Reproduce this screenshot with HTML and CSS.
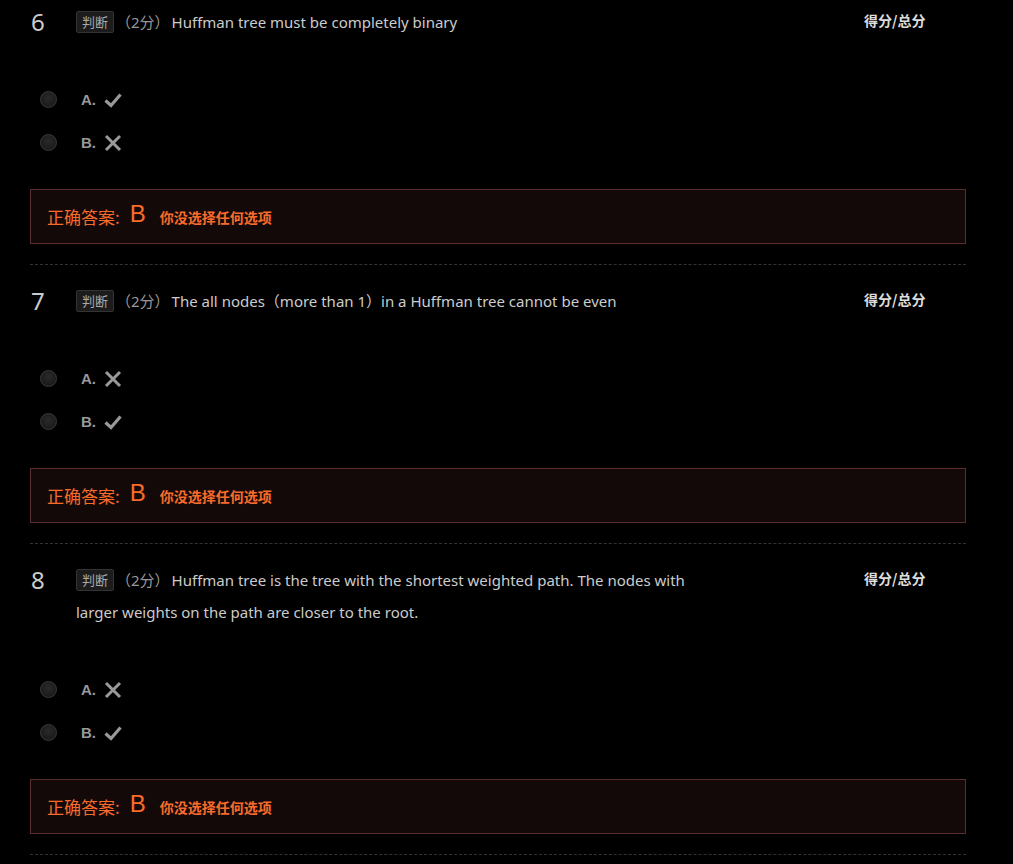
FILE: index.html
```html
<!DOCTYPE html>
<html lang="zh">
<head>
<meta charset="utf-8">
<link rel="stylesheet" href="styles.css">
</head>
<body>
<div class="list">
  <div class="question first">
    <div class="q-head">
      <div class="q-num">6</div>
      <div class="q-body"><span class="tag">判断</span><span class="score">（2分）</span>Huffman tree must be completely binary</div>
      <div class="q-points">得分/总分</div>
    </div>
    <ul class="options">
      <li class="option"><span class="radio"></span><span class="opt-label">A.</span><svg class="icon" viewBox="0 0 18 18"><path d="M1.5 9.5 L7 14.5 L16.5 3.5" fill="none" stroke="#999" stroke-width="3.2"/></svg></li>
      <li class="option"><span class="radio"></span><span class="opt-label">B.</span><svg class="icon" viewBox="0 0 18 18"><path d="M2 2 L16 16 M16 2 L2 16" fill="none" stroke="#999" stroke-width="3"/></svg></li>
    </ul>
    <div class="answer"><span class="ans-label">正确答案:</span><span class="ans-value">B</span><span class="ans-note">你没选择任何选项</span></div>
  </div>

  <div class="question">
    <div class="q-head">
      <div class="q-num">7</div>
      <div class="q-body"><span class="tag">判断</span><span class="score">（2分）</span>The all nodes（more than 1）in a Huffman tree cannot be even</div>
      <div class="q-points">得分/总分</div>
    </div>
    <ul class="options">
      <li class="option"><span class="radio"></span><span class="opt-label">A.</span><svg class="icon" viewBox="0 0 18 18"><path d="M2 2 L16 16 M16 2 L2 16" fill="none" stroke="#999" stroke-width="3"/></svg></li>
      <li class="option"><span class="radio"></span><span class="opt-label">B.</span><svg class="icon" viewBox="0 0 18 18"><path d="M1.5 9.5 L7 14.5 L16.5 3.5" fill="none" stroke="#999" stroke-width="3.2"/></svg></li>
    </ul>
    <div class="answer"><span class="ans-label">正确答案:</span><span class="ans-value">B</span><span class="ans-note">你没选择任何选项</span></div>
  </div>

  <div class="question">
    <div class="q-head">
      <div class="q-num">8</div>
      <div class="q-body"><span class="tag">判断</span><span class="score">（2分）</span>Huffman tree is the tree with the shortest weighted path. The nodes with larger weights on the path are closer to the root.</div>
      <div class="q-points">得分/总分</div>
    </div>
    <ul class="options">
      <li class="option"><span class="radio"></span><span class="opt-label">A.</span><svg class="icon" viewBox="0 0 18 18"><path d="M2 2 L16 16 M16 2 L2 16" fill="none" stroke="#999" stroke-width="3"/></svg></li>
      <li class="option"><span class="radio"></span><span class="opt-label">B.</span><svg class="icon" viewBox="0 0 18 18"><path d="M1.5 9.5 L7 14.5 L16.5 3.5" fill="none" stroke="#999" stroke-width="3.2"/></svg></li>
    </ul>
    <div class="answer"><span class="ans-label">正确答案:</span><span class="ans-value">B</span><span class="ans-note">你没选择任何选项</span></div>
  </div>
</div>
</body>
</html>
```

FILE: styles.css
```css
html, body {
  margin: 0;
  padding: 0;
  background: #000;
}
body {
  font-family: "Noto Sans", "Noto Sans CJK SC", sans-serif;
  color: #ccc;
}
.list {
  width: 936px;
  margin-left: 30px;
}
.question {
  padding-top: 20px;
  border-bottom: 1px dashed #333;
}
.question.first {
  padding-top: 6px;
}
.q-head {
  display: flex;
  align-items: flex-start;
}
.q-num {
  width: 46px;
  font-size: 24px;
  line-height: 32px;
  color: #ccc;
  padding-left: 1px;
  box-sizing: border-box;
}
.q-body {
  width: 640px;
  font-size: 15px;
  line-height: 32px;
  color: #ccc;
}
.tag {
  display: inline-block;
  height: 20px;
  line-height: 20px;
  padding: 0 5px;
  background: #1c1c1c;
  border: 1px solid #333;
  border-radius: 2px;
  color: #aaa;
  font-size: 13px;
  vertical-align: 1px;
}
.score {
  color: #999;
  margin-left: 2px;
  margin-right: 2px;
}
.q-points {
  margin-left: auto;
  width: 102px;
  font-size: 14px;
  font-weight: bold;
  line-height: 28px;
  color: #ddd;
  font-family: "Noto Sans CJK SC", sans-serif;
}
.options {
  list-style: none;
  margin: 40px 0 0;
  padding: 0 0 0 10px;
}
.option {
  display: flex;
  align-items: center;
  height: 43px;
}
.radio {
  width: 17px;
  height: 17px;
  border-radius: 50%;
  box-sizing: border-box;
  border: 1px solid #3a3a3a;
  background: radial-gradient(circle at 50% 40%, #2a2a2a, #151515);
}
.opt-label {
  margin-left: 24px;
  font-size: 15px;
  font-weight: bold;
  color: #999;
  font-family: "Liberation Sans", sans-serif;
}
.icon {
  width: 18px;
  height: 18px;
  margin-left: 8px;
}
.answer {
  margin: 25px 0 20px;
  height: 55px;
  box-sizing: border-box;
  border: 1px solid #5a2e2e;
  background: #140909;
  display: flex;
  align-items: center;
  padding-left: 16px;
  color: #f96b2b;
  font-family: "Noto Sans CJK SC", sans-serif;
}
.ans-label {
  font-size: 17px;
}
.ans-value {
  font-size: 24px;
  margin-left: 10px;
  font-family: "Liberation Sans", sans-serif;
  margin-top: -5px;
}
.ans-note {
  font-size: 14px;
  margin-left: 14px;
  font-weight: bold;
}
```
